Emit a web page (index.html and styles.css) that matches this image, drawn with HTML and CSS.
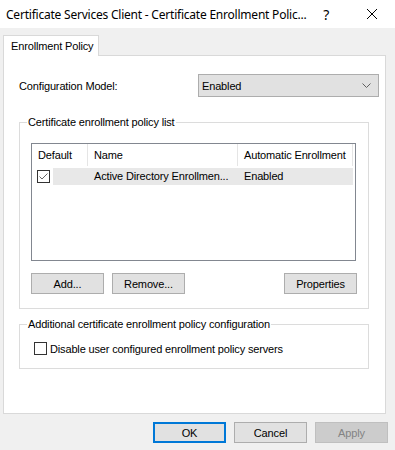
FILE: index.html
```html
<!DOCTYPE html>
<html lang="en">
<head>
    <meta charset="UTF-8">
    <meta name="viewport" content="width=device-width, initial-scale=1.0">
    <title>Certificate Services Client - Certificate Enrollment Policy</title>
    <link rel="stylesheet" href="styles.css">
</head>
<body>
    <div class="titlebar">
        <span class="title">Certificate Services Client - Certificate Enrollment Polic...</span>
        <span class="help">?</span>
        <svg class="close" width="12" height="12" viewBox="0 0 12 12">
            <path d="M1 1 L11 11 M11 1 L1 11" stroke="#000" stroke-width="1" fill="none"/>
        </svg>
    </div>

    <div class="tabs">
        <div class="tab">Enrollment Policy</div>
    </div>

    <div class="panel">
        <div class="config-row">
            <label class="config-label">Configuration Model:</label>
            <div class="combo">
                <span>Enabled</span>
                <svg width="9" height="5" viewBox="0 0 9 5">
                    <path d="M0.5 0.5 L4.5 4.5 L8.5 0.5" stroke="#606060" stroke-width="1" fill="none"/>
                </svg>
            </div>
        </div>

        <fieldset class="group policy-group">
            <legend>Certificate enrollment policy list</legend>
            <div class="listview">
                <div class="lv-row lv-header">
                    <div class="col col-default">Default</div>
                    <div class="col col-name">Name</div>
                    <div class="col col-auto">Automatic Enrollment</div>
                </div>
                <div class="lv-row lv-item">
                    <div class="col col-default">
                        <span class="lv-check">
                            <svg width="11" height="11" viewBox="0 0 11 11">
                                <path d="M1.5 5.5 L4 8 L9.5 2.5" stroke="#666" stroke-width="1" fill="none"/>
                            </svg>
                        </span>
                    </div>
                    <div class="col col-name selected">Active Directory Enrollmen...</div>
                    <div class="col col-auto selected">Enabled</div>
                </div>
            </div>
            <div class="button-row">
                <button class="btn">Add...</button>
                <button class="btn">Remove...</button>
                <button class="btn push-right">Properties</button>
            </div>
        </fieldset>

        <fieldset class="group extra-group">
            <legend>Additional certificate enrollment policy configuration</legend>
            <label class="checkline">
                <span class="checkbox"></span>
                Disable user configured enrollment policy servers
            </label>
        </fieldset>
    </div>

    <div class="footer">
        <button class="btn default">OK</button>
        <button class="btn">Cancel</button>
        <button class="btn" disabled>Apply</button>
    </div>
</body>
</html>
```

FILE: styles.css
```css
* {
    box-sizing: border-box;
}

body {
    margin: 0;
    background-color: #f0f0f0;
    font-family: "Liberation Sans", Arial, sans-serif;
    font-size: 11px;
    letter-spacing: -0.15px;
    color: #000;
}

.titlebar {
    height: 28px;
    background-color: #fff;
    display: flex;
    align-items: center;
    font-family: "Noto Sans", "Open Sans", sans-serif;
    font-size: 12px;
    letter-spacing: -0.22px;
}

.title {
    padding-left: 6px;
    flex: 1;
    white-space: nowrap;
    padding-top: 1px;
}

.help {
    font-size: 14px;
    margin-right: 37px;
}

.close {
    margin-right: 17px;
}

.tabs {
    display: flex;
    padding: 7px 0 0 3px;
}

.tab {
    width: 96px;
    height: 21px;
    border: 1px solid #d9d9d9;
    border-bottom: none;
    background-color: #fff;
    padding-left: 7px;
    line-height: 21px;
    white-space: nowrap;
    margin-bottom: -1px;
    position: relative;
    z-index: 1;
}

.panel {
    margin: 0 9px 0 3px;
    height: 359px;
    border: 1px solid #d9d9d9;
    background-color: #fff;
    padding: 18px 16px 0 15px;
}

.config-row {
    display: flex;
    align-items: center;
    height: 23px;
}

.config-label {
    width: 179px;
}

.combo {
    flex: 1;
    height: 23px;
    margin-right: -10px;
    border: 1px solid #adadad;
    background-color: #e1e1e1;
    display: flex;
    align-items: center;
    justify-content: space-between;
    padding: 0 7px 0 3px;
}

.group {
    margin: 0;
    border: 1px solid #dcdcdc;
    padding: 0 12px 0 11px;
    width: 350px;
}

.group legend {
    padding: 0 1px;
    margin-left: -4px;
    line-height: 16px;
}

.policy-group {
    margin-top: 17px;
    padding-top: 13px;
    padding-bottom: 14px;
}

.listview {
    height: 118px;
    border: 1px solid #828790;
    background-color: #fff;
}

.lv-row {
    display: flex;
}

.lv-header {
    height: 22px;
    line-height: 22px;
    margin-bottom: 2px;
}

.lv-header .col {
    border-right: 1px solid #e5e5e5;
}

.col {
    padding-left: 6px;
    white-space: nowrap;
    overflow: hidden;
}

.col-default {
    width: 56px;
}

.col-name {
    width: 150px;
}

.col-auto {
    width: 115px;
}

.lv-item {
    height: 17px;
    line-height: 17px;
}

.lv-item .col-default {
    padding-left: 5px;
    background: linear-gradient(to right, #fff 21px, #e8e8e8 21px);
}

.selected {
    background-color: #e8e8e8;
}

.lv-check {
    display: inline-block;
    width: 13px;
    height: 13px;
    border: 1px solid #333;
    background-color: #fff;
    vertical-align: -3px;
}

.lv-check svg {
    display: block;
}

.button-row {
    display: flex;
    gap: 8px;
    margin-top: 12px;
}

.btn {
    width: 73px;
    height: 21px;
    border: 1px solid #adadad;
    background-color: #e1e1e1;
    font-family: inherit;
    font-size: 11px;
    letter-spacing: inherit;
    color: #000;
    padding: 0;
}

.push-right {
    margin-left: auto;
    margin-right: -1px;
}

.btn.default {
    border: 2px solid #0078d7;
}

.btn:disabled {
    background-color: #cccccc;
    border-color: #bfbfbf;
    color: #838383;
}

.extra-group {
    margin-top: 7px;
    padding-top: 10px;
    padding-bottom: 13px;
}

.checkline {
    display: flex;
    align-items: center;
    gap: 3px;
    padding-left: 3px;
}

.checkbox {
    width: 13px;
    height: 13px;
    border: 1px solid #333;
    background-color: #fff;
}

.footer {
    display: flex;
    justify-content: flex-end;
    gap: 8px;
    padding: 8px 7px 0 0;
}
```
